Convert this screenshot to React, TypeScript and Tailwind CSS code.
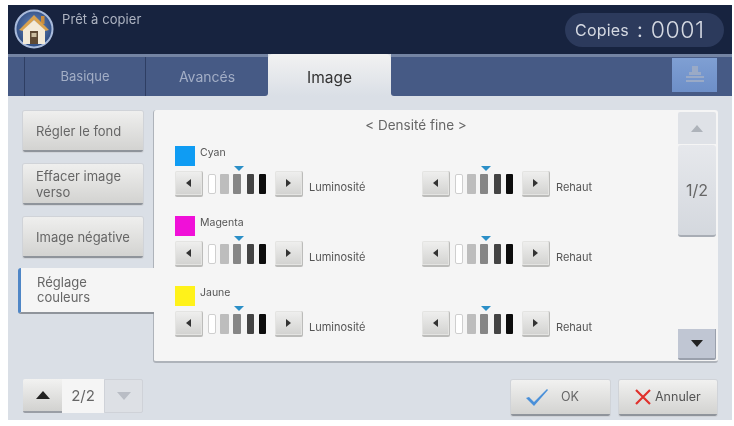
const F = "font-['Inter','Liberation_Sans',sans-serif]";

function Tri({ dir, cls, big }: { dir: 'l' | 'r' | 'u' | 'd'; cls: string; big?: boolean }) {
  const pts = { l: '8,0 8,10 0,5', r: '0,0 0,10 8,5', u: '7,0 14,9 0,9', d: '0,0 14,0 7,9' }[dir];
  const box = dir === 'l' || dir === 'r' ? '0 0 8 10' : '0 0 14 9';
  const w = dir === 'l' || dir === 'r' ? 5 : big ? 14 : 12;
  const h = dir === 'l' || dir === 'r' ? 8 : big ? 8 : 7;
  return (
    <svg width={w} height={h} viewBox={box} preserveAspectRatio="none" className={cls}>
      <polygon points={pts} fill="currentColor" />
    </svg>
  );
}

function StepBtn({ dir }: { dir: 'l' | 'r' }) {
  return (
    <div className="w-[28px] h-[26px] rounded-[2px] flex items-center justify-center bg-gradient-to-b from-[#f0f0ef] to-[#d2d2d0] border-b-2 border-r border-[#bcbcba] shadow-[inset_0_0_0_1px_#e4e4e2]">
      <Tri dir={dir} cls="text-[#333]" />
    </div>
  );
}

function Stepper({ label }: { label: string }) {
  return (
    <div className="flex flex-col items-start">
      <div className="h-[5px] w-[128px] flex justify-center">
        <div className="w-[10px] h-[5px] bg-[#2b8fc7] [clip-path:polygon(0_0,100%_0,50%_100%)]" />
      </div>
      <div className="flex items-center h-[26px]">
        <StepBtn dir="l" />
        <div className="flex items-center w-[72px] pl-[5px]">
          <div className="w-[8px] h-[20px] rounded-[2px] bg-white border border-[#cfcfcf]" />
          <div className="ml-[4px] w-[9px] h-[20px] rounded-[1px] bg-[#bdbdbd]" />
          <div className="ml-[4px] w-[8px] h-[20px] rounded-[1px] bg-[#868686]" />
          <div className="ml-[6px] w-[7px] h-[20px] rounded-[1px] bg-[#444444]" />
          <div className="ml-[5px] w-[7px] h-[20px] rounded-[1px] bg-[#0c0c0c]" />
        </div>
        <StepBtn dir="r" />
        <span className="ml-[6px] mt-[7px] text-[11px] text-[#555]">{label}</span>
      </div>
    </div>
  );
}

function ColorRow({ name, swatch }: { name: string; swatch: string }) {
  return (
    <div className="h-[70px]">
      <div className="flex h-[20px]">
        <div className={`w-[20px] h-[20px] ${swatch}`} />
        <span className="ml-[5px] mt-[1px] text-[10.5px] leading-[12px] text-[#555]">{name}</span>
      </div>
      <div className="flex">
        <div className="w-[247px]"><Stepper label="Luminosité" /></div>
        <Stepper label="Rehaut" />
      </div>
    </div>
  );
}

function SideBtn({ children }: { children: React.ReactNode }) {
  return (
    <div className="w-[120px] h-[41px] rounded-[2px] flex items-center pl-[13px] text-[13px] leading-[16px] text-[#666] bg-gradient-to-b from-[#efefee] to-[#d3d3d1] border-b-2 border-[#8f949b] shadow-[0_0_0_1px_#d0d3d8]">
      <span>{children}</span>
    </div>
  );
}

function Home() {
  return (
    <svg width="40" height="40" viewBox="0 0 40 40">
      <defs>
        <radialGradient id="bg" cx="50%" cy="45%" r="55%">
          <stop offset="0%" stopColor="#6d8bbd" />
          <stop offset="100%" stopColor="#2c4a80" />
        </radialGradient>
      </defs>
      <circle cx="20" cy="20" r="18.5" fill="url(#bg)" stroke="#a9bbdb" strokeWidth="2" />
      <rect x="27" y="7" width="3.5" height="8" fill="#c98c3c" />
      <polygon points="20,6 35,21 31,22 20,11 9,22 5,21" fill="#d9a24e" />
      <polygon points="20,11 31,21 31,35 9,35 9,21" fill="#f3ead8" />
      <rect x="16" y="22" width="8" height="13" fill="#5f4a34" />
      <rect x="17.5" y="24" width="5" height="4" fill="#cbbd9f" />
    </svg>
  );
}

export default function App() {
  return (
    <div className={`w-[734px] h-[426px] bg-white pl-[8px] pr-[2px] pt-[5px] pb-[6px] flex flex-col overflow-hidden blur-[0.4px] ${F}`}>
      {/* Header */}
      <div className="h-[49px] shrink-0 bg-[#17233f] flex justify-between pl-[6px] pr-[8px] pt-[4px]">
        <div className="flex">
          <Home />
          <span className="ml-[8px] mt-[3px] text-[13px] leading-[14px] text-[#aeb4c2] tracking-[0.1px]">Prêt à copier</span>
        </div>
        <div className="mt-[4px] w-[159px] h-[34px] rounded-full bg-[#2c3a5c] flex items-center pl-[10px] text-[#d5d9e2]">
          <span className="text-[16px] tracking-[0.2px]">Copies</span>
          <span className="ml-[8px] text-[20px] leading-none">:</span>
          <span className="ml-[8px] text-[23px] leading-none font-light tracking-[0.6px]">0001</span>
        </div>
      </div>
      {/* Tabs */}
      <div className="h-[42px] shrink-0 flex bg-[#dadfe6]">
        <div className="flex-none w-[260px] flex bg-[#465a85] border-t-[3px] border-[#7484a3] rounded-br-[3px]">
          <div className="w-[17px] border-r border-[#2e3e63]" />
          <div className="w-[121px] border-r border-[#2e3e63] flex items-center justify-center text-[13px] text-[#a3aec6]">Basique</div>
          <div className="w-[122px] flex items-center justify-center text-[14px] text-[#a3aec6]">Avancés</div>
        </div>
        <div className="w-[123px] h-[42px] pt-[6px] rounded-t-[5px] bg-gradient-to-b from-[#f2f2f2] to-[#dadfe6] flex items-center justify-center text-[15.5px] text-[#333]">Image</div>
        <div className="flex-1 flex justify-end items-center bg-[#465a85] border-t-[3px] border-[#7484a3] rounded-bl-[3px] pb-[3px] pr-[15px]">
          <div className="w-[45px] h-[34px] bg-gradient-to-b from-[#7f9fd3] to-[#6d8fc8] flex items-center justify-center">
            <svg width="20" height="18" viewBox="0 0 20 18" fill="#9aaac6">
              <rect x="7" y="0" width="6" height="6" />
              <rect x="4" y="6" width="12" height="3" />
              <rect x="1" y="10" width="18" height="2" />
              <rect x="1" y="14" width="18" height="2" />
            </svg>
          </div>
        </div>
      </div>
      {/* Body */}
      <div className="flex-1 bg-[#dadfe6] flex flex-col min-h-0">
        <div className="flex pt-[14px] pr-[14px]">
          <div className="w-[145px] pt-[1px] flex flex-col items-start">
            <div className="pl-[15px] flex flex-col gap-[12px]">
              <SideBtn>Régler le fond</SideBtn>
              <SideBtn>Effacer image<br />verso</SideBtn>
              <SideBtn>Image négative</SideBtn>
            </div>
            <div className="mt-[10px] ml-[10px] w-[136px] h-[46px] bg-[#f5f5f5] border-l-[3px] border-b-2 border-l-[#4f86c6] border-b-[#8f949b] rounded-l-[3px] flex items-center pl-[16px] text-[13px] leading-[15px] text-[#666] relative z-10">
              <span>Réglage<br />couleurs</span>
            </div>
          </div>
          <div className="flex-1 h-[253px] bg-[#f5f5f5] rounded-[3px] border-b-2 border-l border-[#aeb3ba] flex pr-[2px]">
            <div className="flex-1 min-w-0">
              <div className="text-center text-[13.5px] leading-[16px] text-[#666] pt-[7px] h-[36px]">&lt; Densité fine &gt;</div>
              <div className="pl-[21px]">
                <ColorRow name="Cyan" swatch="bg-[#0f9cf3]" />
                <ColorRow name="Magenta" swatch="bg-[#f010d8]" />
                <ColorRow name="Jaune" swatch="bg-[#fff21a]" />
              </div>
            </div>
            <div className="w-[38px] flex flex-col pt-[2px] pb-[1px]">
              <div className="h-[32px] bg-[#dfe2e7] rounded-t-[2px] flex items-center justify-center"><Tri dir="u" cls="text-[#aeb3ba]" /></div>
              <div className="h-[92px] mt-[1px] bg-gradient-to-b from-[#e6e8ec] to-[#d4d8de] rounded-[3px] border-b-2 border-[#a8adb5] flex items-center justify-center text-[16px] text-[#666]">1/2</div>
              <div className="flex-1" />
              <div className="h-[31px] bg-[#c0c6d3] rounded-b-[2px] border-b-2 border-r border-[#9aa0ac] flex items-center justify-center"><Tri dir="d" cls="text-[#222]" /></div>
            </div>
          </div>
        </div>
        {/* Footer */}
        <div className="flex justify-between items-start pl-[15px] pr-[15px] pt-[16px]">
          <div className="flex h-[34px] w-[120px] rounded-[2px]">
            <div className="w-[39px] bg-gradient-to-b from-[#f2f2f1] to-[#d2d2d0] border-b-2 border-[#9a9ea5] rounded-l-[2px] flex items-center justify-center"><Tri dir="u" big cls="text-[#222]" /></div>
            <div className="w-[42px] bg-[#f5f5f5] flex items-center justify-center text-[15px] text-[#666]">2/2</div>
            <div className="w-[39px] bg-[#dde0e5] border border-[#cfd2d8] rounded-r-[2px] flex items-center justify-center"><Tri dir="d" big cls="text-[#b9bdc5]" /></div>
          </div>
          <div className="flex gap-[9px] mt-[1px]">
            <div className="w-[99px] h-[36px] rounded-[2px] bg-gradient-to-b from-[#f1f1f0] to-[#d3d3d1] border-b-2 border-[#8f949b] flex items-center pl-[15px] text-[12.5px] text-[#666] shadow-[0_0_0_1px_#d0d3d8]">
              <svg width="22" height="17" viewBox="0 0 22 17"><polygon points="0,9 3,8 8,13 21,0 22,1 8,17" fill="#4a90d9" /></svg>
              <span className="ml-[13px]">OK</span>
            </div>
            <div className="w-[98px] h-[36px] rounded-[2px] bg-gradient-to-b from-[#f1f1f0] to-[#d3d3d1] border-b-2 border-[#8f949b] flex items-center pl-[15px] text-[12.5px] text-[#555] shadow-[0_0_0_1px_#d0d3d8]">
              <svg width="18" height="16" viewBox="0 0 18 16" fill="none" stroke="#e0312c" strokeWidth="2.2"><path d="M2 1 L16 15 M16 1 L2 15" /></svg>
              <span className="ml-[3px]">Annuler</span>
            </div>
          </div>
        </div>
      </div>
    </div>
  );
}
